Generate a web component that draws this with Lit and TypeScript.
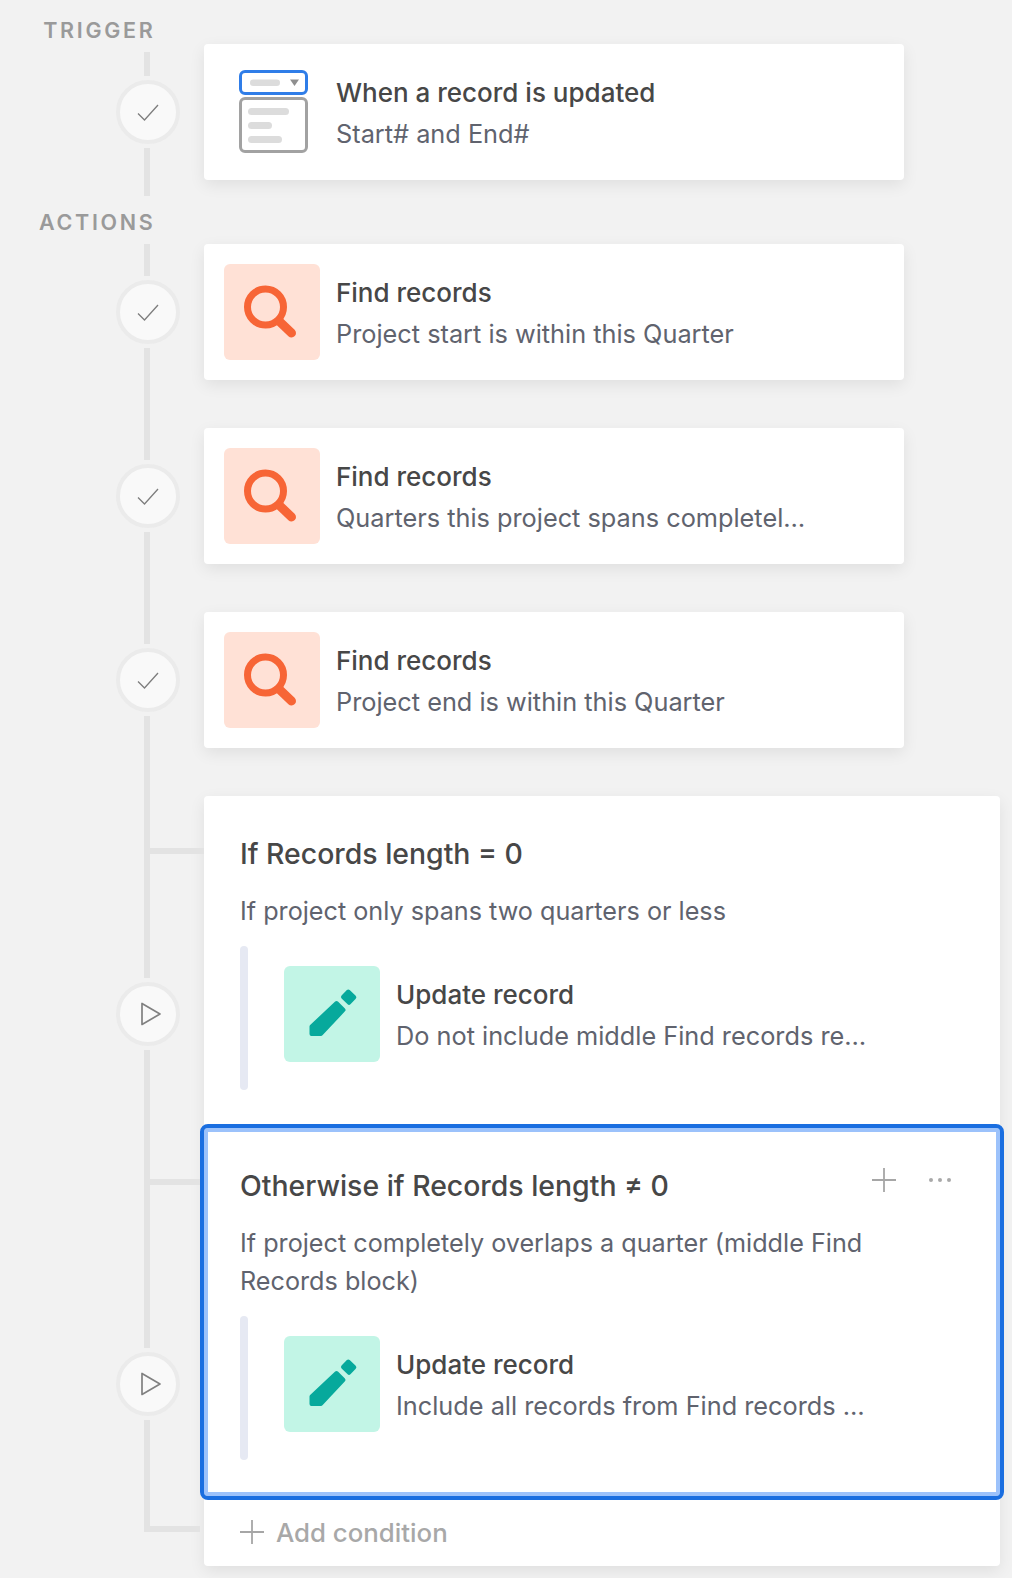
import { LitElement, html, css, svg } from "lit";
import { customElement } from "lit/decorators.js";

const check = html`<svg width="22" height="22" viewBox="0 0 22 22" fill="none"><path d="M1 12.5 L7.5 19 L21 4" stroke="#7d7d7d" stroke-width="1.3"/></svg>`;
const play = html`<svg class="play" width="22" height="26" viewBox="0 0 22 26" fill="none"><path d="M2 2.5 V23.5 L20 13 Z" stroke="#808080" stroke-width="1.7" stroke-linejoin="round"/></svg>`;
const plus = html`<svg width="24" height="24" viewBox="0 0 24 24" fill="none"><path d="M12 0 V24 M0 12 H24" stroke="#a6a6a6" stroke-width="1.8"/></svg>`;
const dots = html`<svg width="22" height="6" viewBox="0 0 22 6"><g fill="#a9a9a9">${svg`<circle cx="2" cy="3" r="2"/><circle cx="11" cy="3" r="2"/><circle cx="20" cy="3" r="2"/>`}</g></svg>`;
const search = html`<svg width="96" height="96" viewBox="0 0 96 96" fill="none"><circle cx="41.5" cy="43" r="18" stroke="#f76536" stroke-width="7"/><path d="M56 58 L67.5 69" stroke="#f76536" stroke-width="9" stroke-linecap="round"/></svg>`;
const pencil = html`<svg width="96" height="96" viewBox="0 0 96 96"><g fill="#07a99c" stroke="#07a99c" stroke-width="4" stroke-linejoin="round"><path d="M59 31 L64.3 25.5 L70.3 31.3 L65 36.8 Z"/><path d="M52.5 37 L59.5 44 L37 68 H27.5 V60.5 Z"/></g></svg>`;
const triggerIcon = html`<svg width="70" height="84" viewBox="0 0 70 84" fill="none">
  <rect x="1.5" y="1.5" width="66" height="22" rx="4.5" stroke="#2f7de8" stroke-width="3"/>
  <rect x="11" y="9.5" width="30" height="6.5" rx="3.2" fill="#dcdcdc"/>
  <path d="M51 9.5 H60 L55.5 16 Z" fill="#8f8f8f"/>
  <rect x="1.5" y="28.5" width="66" height="53" rx="4.5" stroke="#a2a2a2" stroke-width="3"/>
  <rect x="9" y="38" width="41" height="7" rx="3.5" fill="#dcdcdc"/>
  <rect x="9" y="52" width="24" height="7" rx="3.5" fill="#dcdcdc"/>
  <rect x="9" y="66" width="34" height="7" rx="3.5" fill="#dcdcdc"/>
</svg>`;

@customElement("app-root")
export class AppRoot extends LitElement {
  static styles = css`
    :host {
      display: block;
      width: 1012px;
      height: 1578px;
      overflow: hidden;
      background: #f2f2f2;
      font-family: Inter, "Noto Sans", sans-serif;
      -webkit-font-smoothing: antialiased;
    }
    .row { display: grid; grid-template-columns: 204px 1fr; }
    .label-row { align-items: start; }
    .label {
      width: 155.5px;
      text-align: right;
      font-size: 21.5px;
      font-weight: 600;
      letter-spacing: 2.7px;
      line-height: 26px;
      color: #9a9a9a;
    }
    .lr1 { height: 44px; padding-top: 17px; box-sizing: border-box; }
    .lr2 { height: 48px; padding-top: 13px; box-sizing: border-box; }

    .rail { display: flex; flex-direction: column; align-items: center; width: 64px; margin-left: 116px; gap: 4px; }
    .seg { width: 6px; margin-right: 2px; background: #e3e3e3; position: relative; }
    .grow { flex: 1; }
    .s24 { height: 24px; margin-top: 8px; }
    .s32 { height: 32px; }
    .s182 { height: 182px; }
    .s298 { height: 298px; }
    .s112 { height: 112px; }
    .node {
      width: 64px; height: 64px; box-sizing: border-box; border-radius: 50%;
      background: #f9f9f9; border: 4px solid #ebebeb;
      display: flex; align-items: center; justify-content: center; flex: none;
    }
    .play { margin-left: 5px; }
    .branch { position: absolute; left: 6px; height: 6px; background: #e3e3e3; }
    .b1 { top: 52px; width: 54px; }
    .b2 { top: 129px; width: 50px; }
    .b3 { bottom: 0; left: 0; width: 56px; }

    .card {
      width: 700px; height: 136px; box-sizing: border-box; padding: 20px; margin-bottom: 48px;
      background: #fff; border-radius: 4px;
      box-shadow: 0 5px 16px rgba(0, 0, 0, 0.08);
      display: flex; align-items: center; gap: 16px;
    }
    .first { margin-bottom: 16px; }
    .tile { width: 96px; height: 96px; border-radius: 6px; flex: none; }
    .orange { background: #ffe1d6; }
    .mint { background: #c2f5e6; }
    .plain { display: flex; align-items: center; justify-content: center; padding-left: 4px; box-sizing: border-box; }
    .txt { padding-top: 2px; }
    .t { font-size: 26px; font-weight: 500; line-height: 41px; color: #474747; white-space: nowrap; }
    .s { font-size: 25.3px; font-weight: 400; line-height: 41px; color: #60636e; white-space: nowrap; }

    .big {
      width: 796px; height: 770px; background: #fff; border-radius: 4px;
      box-shadow: 0 5px 16px rgba(0, 0, 0, 0.08);
      display: flex; flex-direction: column;
    }
    .sec1 { box-sizing: border-box; height: 328px; padding: 40px 36px 0; }
    .sec2 {
      box-sizing: border-box; height: 376px; margin: 0 -4px; padding: 40px 36px 0;
      border: 4px solid #1a6ee0; border-radius: 8px;
      box-shadow: inset 0 0 0 4px #9cc2fb;
      background: #fff; position: relative;
    }
    .head { display: flex; align-items: center; justify-content: space-between; height: 36px; }
    .h { font-size: 28.4px; font-weight: 500; line-height: 36px; color: #474747; white-space: nowrap; }
    .tools { display: flex; align-items: center; gap: 33px; padding-right: 13px; margin-top: -12px; }
    .tools svg { display: block; }
    .d { font-size: 25.2px; line-height: 38px; color: #60636e; margin-top: 20px; }
    .nest { display: flex; gap: 36px; margin-top: 16px; height: 144px; }
    .bar { width: 8px; border-radius: 4px; background: #e6e9f3; }
    .inner { display: flex; align-items: center; gap: 16px; height: 96px; margin-top: 20px; }
    .add { display: flex; align-items: center; gap: 12px; height: 64px; padding-left: 36px; font-size: 25.8px; font-weight: 500; color: #a8a8a8; }
  `;

  private node(icon: unknown) {
    return html`<div class="node">${icon}</div>`;
  }

  private text(title: string, sub: string) {
    return html`<div class="txt"><div class="t">${title}</div><div class="s">${sub}</div></div>`;
  }

  private action(sub: string) {
    return html`<div class="row">
      <div class="rail">
        <div class="seg s32"></div>
        ${this.node(check)}
        <div class="seg grow"></div>
      </div>
      <div class="card">
        <div class="tile orange">${search}</div>
        ${this.text("Find records", sub)}
      </div>
    </div>`;
  }

  render() {
    return html`
      <div class="row label-row lr1"><div class="label">TRIGGER</div></div>
      <div class="row">
        <div class="rail">
          <div class="seg s24"></div>
          ${this.node(check)}
          <div class="seg grow"></div>
        </div>
        <div class="card first">
          <div class="tile plain">${triggerIcon}</div>
          ${this.text("When a record is updated", "Start# and End#")}
        </div>
      </div>
      <div class="row label-row lr2"><div class="label">ACTIONS</div></div>
      ${this.action("Project start is within this Quarter")}
      ${this.action("Quarters this project spans completel…")}
      ${this.action("Project end is within this Quarter")}
      <div class="row">
        <div class="rail">
          <div class="seg s182"><div class="branch b1"></div></div>
          ${this.node(play)}
          <div class="seg s298"><div class="branch b2"></div></div>
          ${this.node(play)}
          <div class="seg s112"><div class="branch b3"></div></div>
        </div>
        <div class="big">
          <div class="sec1">
            <div class="head"><div class="h">If Records length = 0</div></div>
            <div class="d">If project only spans two quarters or less</div>
            <div class="nest">
              <div class="bar"></div>
              <div class="inner">
                <div class="tile mint">${pencil}</div>
                ${this.text("Update record", "Do not include middle Find records re…")}
              </div>
            </div>
          </div>
          <div class="sec2">
            <div class="head">
              <div class="h">Otherwise if Records length ≠ 0</div>
              <div class="tools">${plus}${dots}</div>
            </div>
            <div class="d">If project completely overlaps a quarter (middle Find Records block)</div>
            <div class="nest">
              <div class="bar"></div>
              <div class="inner">
                <div class="tile mint">${pencil}</div>
                ${this.text("Update record", "Include all records from Find records …")}
              </div>
            </div>
          </div>
          <div class="add">${plus}<span>Add condition</span></div>
        </div>
      </div>
    `;
  }
}
